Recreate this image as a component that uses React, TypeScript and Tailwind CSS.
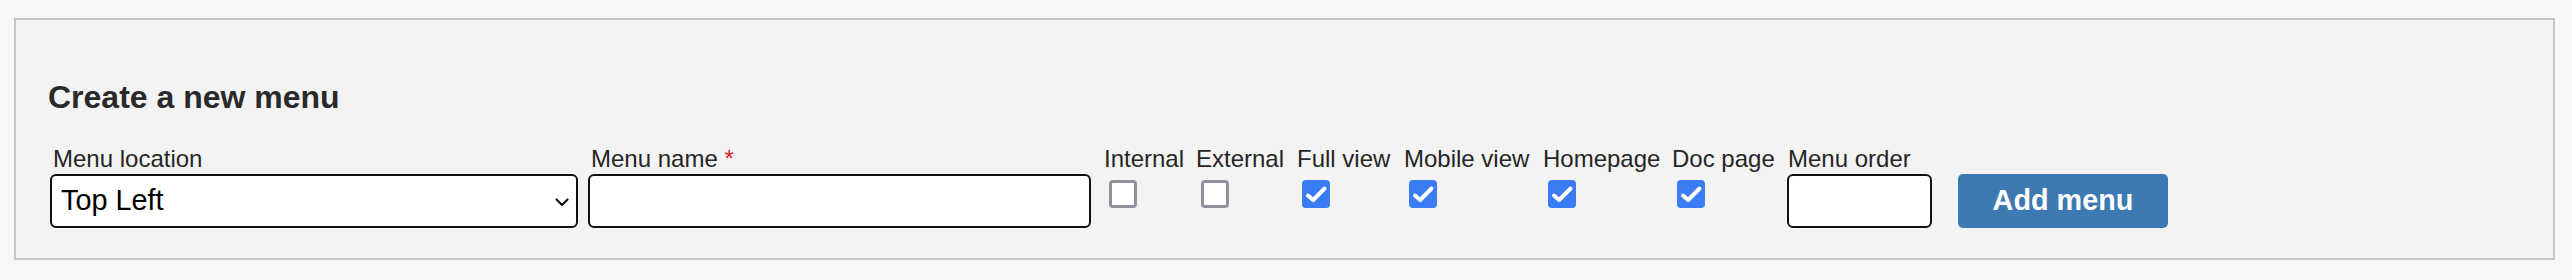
import React from "react";

const font = { fontFamily: '"Liberation Sans", Arial, Helvetica, sans-serif' };

function Check({ checked }: { checked: boolean }) {
  if (!checked) {
    return (
      <span className="block w-[28px] h-[28px] rounded-[4px] border-[3px] border-[#8f8f9d] bg-white" />
    );
  }
  return (
    <span className="block w-[28px] h-[28px] rounded-[4px] bg-[#3a7cf3]">
      <svg width="28" height="28" viewBox="0 0 28 28" fill="none">
        <path d="M6 15.5 L11.2 20 L22.5 8.5" stroke="white" strokeWidth="4" strokeLinecap="round" strokeLinejoin="round" />
      </svg>
    </span>
  );
}

const boxes: { label: string; w: string; checked: boolean }[] = [
  { label: "Internal", w: "w-[92px]", checked: false },
  { label: "External", w: "w-[101px]", checked: false },
  { label: "Full view", w: "w-[107px]", checked: true },
  { label: "Mobile view", w: "w-[139px]", checked: true },
  { label: "Homepage", w: "w-[129px]", checked: true },
  { label: "Doc page", w: "w-[115px]", checked: true },
];

export default function App() {
  return (
    <div className="w-[2572px] h-[280px] bg-[#f7f7f7] pt-[18px] text-[#262626]" style={font}>
      <div className="ml-[14px] w-[2541px] border-2 border-[#c6c6c6] bg-[#f3f3f3] pt-[59px] pb-[30px] pl-[32px]">
        <h3 className="text-[32px] leading-[37px] font-bold text-[#2a2a2a]">Create a new menu</h3>
        <div className="flex items-start mt-[29px] ml-[2px]">
          <div className="flex flex-col w-[528px]">
            <label className="h-[28px] leading-[28px] text-[24px] pl-[3px]">Menu location</label>
            <div className="relative mt-[1px]">
              <select
                className="appearance-none w-full h-[54px] bg-white border-2 border-[#111] rounded-[6px] pl-[9px] text-[28.8px] text-black outline-none"
                style={font}
                defaultValue="Top Left"
              >
                <option>Top Left</option>
                <option>Top Right</option>
                <option>Bottom Left</option>
              </select>
              <svg
                className="absolute right-[9px] top-[24px] pointer-events-none"
                width="14"
                height="9"
                viewBox="0 0 14 9"
                fill="none"
              >
                <path d="M1.5 1.5 L7 7 L12.5 1.5" stroke="#111" strokeWidth="2.2" strokeLinecap="round" strokeLinejoin="round" />
              </svg>
            </div>
          </div>
          <div className="flex flex-col w-[503px] ml-[10px]">
            <label className="h-[28px] leading-[28px] text-[24px] pl-[3px]">
              Menu name <span className="text-[#e02020]">*</span>
            </label>
            <input
              type="text"
              className="mt-[1px] w-full h-[54px] bg-white border-2 border-[#111] rounded-[6px] outline-none"
            />
          </div>
          <div className="flex ml-[13px]">
            {boxes.map((b) => (
              <div key={b.label} className={`flex flex-col ${b.w}`}>
                <span className="h-[28px] leading-[28px] text-[24px] whitespace-nowrap">{b.label}</span>
                <span className="mt-[7px] ml-[5px]">
                  <Check checked={b.checked} />
                </span>
              </div>
            ))}
          </div>
          <div className="flex flex-col w-[145px]">
            <label className="h-[28px] leading-[28px] text-[24px] pl-[1px]">Menu order</label>
            <input
              type="text"
              className="mt-[1px] w-full h-[54px] bg-white border-2 border-[#111] rounded-[6px] outline-none"
            />
          </div>
          <button
            className="ml-[26px] mt-[29px] w-[210px] h-[54px] rounded-[5px] bg-[#3d7ab3] text-white font-bold text-[28.8px]"
            style={font}
          >
            Add menu
          </button>
        </div>
      </div>
    </div>
  );
}
